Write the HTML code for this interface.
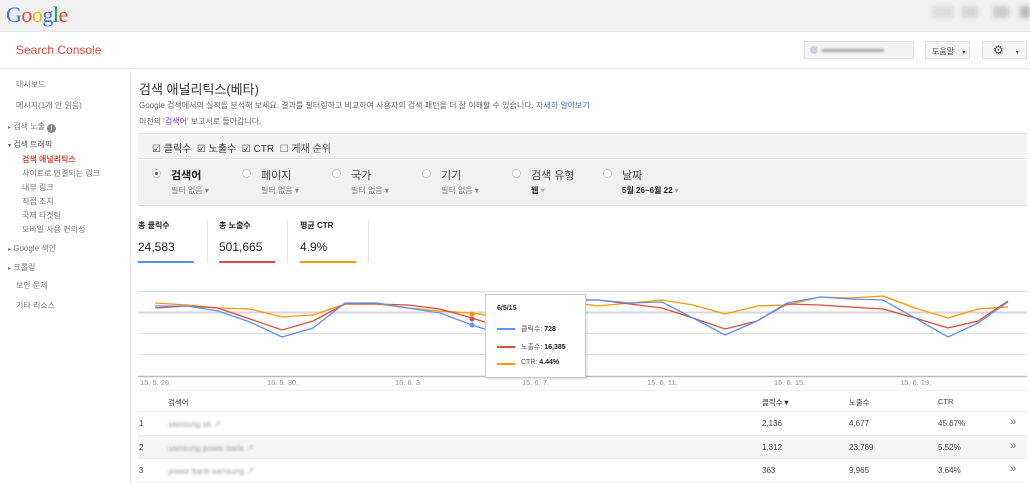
<!DOCTYPE html>
<html><head><meta charset="utf-8"><style>
*{margin:0;padding:0;box-sizing:border-box}
body{width:1030px;height:483px;overflow:hidden;background:#fff;font-family:"Liberation Sans","Noto Sans CJK KR",sans-serif;color:#444;position:relative}
.a{position:absolute;white-space:nowrap}
.s{font-size:8px;color:#666}
.side{font-size:8px;color:#777}
.blur{filter:blur(1.3px);color:#999;font-size:8px}
</style></head><body>
<div class="a" style="left:0;top:0;width:1030px;height:32px;background:#f1f1f1;border-bottom:1px solid #e5e5e5"></div>
<div class="a" style="left:6px;top:2px;font-size:22px;font-family:'Liberation Serif',serif;letter-spacing:-0.5px"><span style="color:#3b78e7">G</span><span style="color:#e04436">o</span><span style="color:#f4b400">o</span><span style="color:#3b78e7">g</span><span style="color:#0f9d58">l</span><span style="color:#e04436">e</span></div>
<div class="a" style="left:932px;top:6px;width:22px;height:12px;background:#ddd;filter:blur(2px)"></div>
<div class="a" style="left:962px;top:6px;width:16px;height:12px;background:#d6d6d6;filter:blur(2px)"></div>
<div class="a" style="left:993px;top:6px;width:16px;height:12px;background:#ccc;filter:blur(2px)"></div>
<div class="a" style="left:1020px;top:6px;width:10px;height:12px;background:#bbb;filter:blur(2px)"></div>
<div class="a" style="left:16px;top:43px;font-size:12px;color:#dd4b39">Search Console</div>
<div class="a" style="left:0;top:68px;width:1030px;border-top:1px solid #ebebeb"></div>
<div class="a" style="left:804px;top:41px;width:110px;height:18px;background:#f3f3f3;border:1px solid #ddd"></div>
<div class="a" style="left:810px;top:46px;width:8px;height:8px;border-radius:50%;background:#cdd3e6"></div>
<div class="a" style="left:822px;top:49px;width:62px;height:3px;background:#aaa;filter:blur(1px)"></div>
<div class="a" style="left:405px;top:41px;"></div>
<div class="a" style="left:925px;top:41px;width:45px;height:18px;background:#f5f5f5;border:1px solid #ddd;font-size:8px;color:#444;padding:4px 0 0 6px">도움말 <span style="margin-left:6px;font-size:6px">▾</span></div>
<div class="a" style="left:982px;top:41px;width:45px;height:18px;background:#f5f5f5;border:1px solid #ddd;font-size:12px;color:#555;padding:1px 0 0 10px">⚙<span style="margin-left:12px;font-size:6px">▾</span></div>
<div class="a" style="left:130px;top:69px;height:414px;border-left:1px solid #ebebeb"></div>
<div class="a side" style="left:16px;top:79px">대시보드</div>
<div class="a side" style="left:16px;top:100px">메시지(1개 안 읽음)</div>
<div class="a side" style="left:8px;top:121px"><span style="font-size:6px">▸</span> 검색 노출 <span style="display:inline-block;width:9px;height:9px;border-radius:50%;background:#888;color:#fff;font-size:7px;text-align:center;line-height:9px;vertical-align:-1px">i</span></div>
<div class="a side" style="left:8px;top:139px;color:#555"><span style="font-size:6px">▾</span> 검색 트래픽</div>
<div class="a side" style="left:22px;top:154px;color:#dd4b39;font-weight:bold">검색 애널리틱스</div>
<div class="a side" style="left:22px;top:168px">사이트로 연결되는 링크</div>
<div class="a side" style="left:22px;top:182px">내부 링크</div>
<div class="a side" style="left:22px;top:196px">직접 조치</div>
<div class="a side" style="left:22px;top:210px">국제 타겟팅</div>
<div class="a side" style="left:22px;top:224px">모바일 사용 편의성</div>
<div class="a side" style="left:8px;top:243px"><span style="font-size:6px">▸</span> Google 색인</div>
<div class="a side" style="left:8px;top:262px"><span style="font-size:6px">▸</span> 크롤링</div>
<div class="a side" style="left:16px;top:280px">보안 문제</div>
<div class="a side" style="left:16px;top:300px">기타 리소스</div>

<div class="a" style="left:139px;top:79px;font-size:13px;color:#333">검색 애널리틱스(베타)</div>
<div class="a s" style="left:139px;top:100px">Google 검색에서의 실적을 분석해 보세요. 결과를 필터링하고 비교하여 사용자의 검색 패턴을 더 잘 이해할 수 있습니다. <span style="color:#4b6fc1">자세히 알아보기</span></div>
<div class="a s" style="left:139px;top:116px">이전의 <span style="color:#7a3fc1">'검색어'</span> 보고서로 돌아갑니다.</div>

<div class="a" style="left:138px;top:133px;width:889px;height:26px;background:#f4f4f4;border-top:1px solid #ddd;border-bottom:1px solid #e2e2e2"></div>
<div class="a" style="left:152px;top:140px;font-size:10px;color:#333">☑ 클릭수 &nbsp;☑ 노출수 &nbsp;☑ CTR &nbsp;<span style="color:#555">☐ 게재 순위</span></div>
<div class="a" style="left:138px;top:160px;width:889px;height:46px;background:#f1f1f1;border-bottom:1px solid #ddd"></div>
<div class="a" style="left:152px;top:169px;width:9px;height:9px;border-radius:50%;border:1px solid #ccc;background:#fff"></div>
<div class="a" style="left:155px;top:172px;width:3px;height:3px;border-radius:50%;background:#555"></div>
<div class="a" style="left:171px;top:167px;font-size:11px;font-weight:bold;color:#222">검색어</div>
<div class="a s" style="left:171px;top:185px;color:#888">필터 없음 ▾</div>
<div class="a" style="left:242px;top:169px;width:9px;height:9px;border-radius:50%;border:1px solid #ccc;background:#fff"></div>
<div class="a" style="left:261px;top:167px;font-size:11px;color:#444">페이지</div>
<div class="a s" style="left:261px;top:185px;color:#888">필터 없음 ▾</div>
<div class="a" style="left:332px;top:169px;width:9px;height:9px;border-radius:50%;border:1px solid #ccc;background:#fff"></div>
<div class="a" style="left:351px;top:167px;font-size:11px;color:#444">국가</div>
<div class="a s" style="left:351px;top:185px;color:#888">필터 없음 ▾</div>
<div class="a" style="left:422px;top:169px;width:9px;height:9px;border-radius:50%;border:1px solid #ccc;background:#fff"></div>
<div class="a" style="left:441px;top:167px;font-size:11px;color:#444">기기</div>
<div class="a s" style="left:441px;top:185px;color:#888">필터 없음 ▾</div>
<div class="a" style="left:512px;top:169px;width:9px;height:9px;border-radius:50%;border:1px solid #ccc;background:#fff"></div>
<div class="a" style="left:531px;top:167px;font-size:11px;color:#444">검색 유형</div>
<div class="a s" style="left:531px;top:185px;color:#222;font-weight:bold">웹 <span style="color:#aaa;font-weight:normal">▾</span></div>
<div class="a" style="left:603px;top:169px;width:9px;height:9px;border-radius:50%;border:1px solid #ccc;background:#fff"></div>
<div class="a" style="left:622px;top:167px;font-size:11px;color:#444">날짜</div>
<div class="a s" style="left:622px;top:185px;color:#222;font-weight:bold">5월 26~6월 22 <span style="color:#aaa;font-weight:normal">▾</span></div>

<div class="a" style="left:138px;top:220px;font-size:8px;font-weight:bold;color:#222">총 클릭수</div>
<div class="a" style="left:138px;top:240px;font-size:12px;color:#222">24,583</div>
<div class="a" style="left:138px;top:261px;width:56px;height:2px;background:#4d90fe"></div>
<div class="a" style="left:207px;top:220px;height:43px;border-left:1px solid #e5e5e5"></div>
<div class="a" style="left:219px;top:220px;font-size:8px;font-weight:bold;color:#222">총 노출수</div>
<div class="a" style="left:219px;top:240px;font-size:12px;color:#222">501,665</div>
<div class="a" style="left:219px;top:261px;width:56px;height:2px;background:#dd4b39"></div>
<div class="a" style="left:287px;top:220px;height:43px;border-left:1px solid #e5e5e5"></div>
<div class="a" style="left:300px;top:220px;font-size:8px;font-weight:bold;color:#222">평균 CTR</div>
<div class="a" style="left:300px;top:240px;font-size:12px;color:#222">4.9%</div>
<div class="a" style="left:300px;top:261px;width:56px;height:2px;background:#ff9800"></div>
<div class="a" style="left:368px;top:220px;height:43px;border-left:1px solid #e5e5e5"></div>

<svg class="a" style="left:0;top:0" width="1030" height="483">
<g stroke="#e0e0e0" stroke-width="1"><line x1="138" y1="291.5" x2="1027" y2="291.5"/><line x1="138" y1="333.5" x2="1027" y2="333.5"/><line x1="138" y1="354.5" x2="1027" y2="354.5"/></g>
<line x1="138" y1="312.5" x2="1027" y2="312.5" stroke="#d6d6d6" stroke-width="2"/>
<line x1="138" y1="376.5" x2="1027" y2="376.5" stroke="#bbb" stroke-width="1.5"/>
<polyline fill="none" stroke="#ff9800" stroke-width="1.3" points="155,303 187,305 218,308 250,309 282,317 313,315 345,304 377,304 408,308 440,311 472,313 503,318 535,305 567,302 598,306 630,303 662,300 693,305 725,314 757,306 787,305 820,297 850,298 883,296 915,308 948,318 978,309 1008,307"/>
<polyline fill="none" stroke="#dd4b39" stroke-width="1.3" points="155,308 187,306 218,308 250,319 282,330 313,321 345,304 377,304 408,305 440,309 472,318 503,328 535,308 567,300 598,300 630,304 662,308 693,318 725,329 757,321 787,304 820,305 850,307 883,309 915,318 948,328 978,321 1008,301"/>
<polyline fill="none" stroke="#5b95f5" stroke-width="1.3" points="155,306 187,306 218,311 250,322 282,337 313,328 345,303 377,303 408,308 440,313 472,325 503,335 535,310 567,300 598,300 630,303 662,302 693,318 725,335 757,321 787,303 820,297 850,299 883,300 915,318 948,337 978,323 1008,302"/>
<circle cx="472" cy="314" r="2.5" fill="#ff9800"/><circle cx="472" cy="319" r="2.5" fill="#dd4b39"/><circle cx="472" cy="325" r="2.5" fill="#5b95f5"/>
<g font-family="Liberation Sans,sans-serif" font-size="7.5" fill="#999">
<text x="140" y="385">15. 5. 26.</text><text x="267" y="385">15. 5. 30.</text><text x="395" y="385">15. 6. 3.</text><text x="522" y="385">15. 6. 7.</text><text x="647" y="385">15. 6. 11.</text><text x="774" y="385">15. 6. 15.</text><text x="900" y="385">15. 6. 19.</text></g>
</svg>

<div class="a" style="left:485px;top:294px;width:101px;height:84px;background:#fff;border:1px solid #ccc;box-shadow:1px 1px 2px rgba(0,0,0,.15)"></div>
<div class="a" style="left:497px;top:305px;font-size:7px;font-weight:bold;color:#222">6/5/15</div>
<div class="a" style="left:497px;top:328px;width:18px;height:1.5px;background:#5b95f5"></div>
<div class="a" style="left:521px;top:324px;font-size:7px;color:#555">클릭수: <b style="color:#222">728</b></div>
<div class="a" style="left:497px;top:346px;width:18px;height:1.5px;background:#dd4b39"></div>
<div class="a" style="left:521px;top:342px;font-size:7px;color:#555">노출수: <b style="color:#222">16,385</b></div>
<div class="a" style="left:497px;top:363px;width:18px;height:1.5px;background:#ff9800"></div>
<div class="a" style="left:521px;top:359px;font-size:7px;color:#555">CTR: <b style="color:#222">4.44%</b></div>

<div class="a" style="left:138px;top:390px;width:889px;border-top:1px solid #f0f0f0"></div>
<div class="a" style="left:168px;top:397px;font-size:7.5px;color:#444">검색어</div>
<div class="a" style="left:762px;top:397px;font-size:7.5px;color:#333">클릭수▼</div>
<div class="a" style="left:849px;top:397px;font-size:7.5px;color:#444">노출수</div>
<div class="a" style="left:938px;top:397px;font-size:7.5px;color:#444">CTR</div>
<div class="a" style="left:138px;top:411px;width:889px;border-top:1px solid #eee"></div>
<div class="a" style="left:138px;top:435px;width:889px;height:24px;background:#f5f5f5;border-top:1px solid #eee;border-bottom:1px solid #eee"></div>
<div class="a" style="left:138px;top:482px;width:889px;border-top:1px solid #eee"></div>
<div class="a" style="left:139px;top:419px;font-size:8px;color:#444">1</div>
<div class="a" style="left:139px;top:443px;font-size:8px;color:#444">2</div>
<div class="a" style="left:139px;top:466px;font-size:8px;color:#444">3</div>
<div class="a blur" style="left:168px;top:419px">samsung s6 ↗</div>
<div class="a blur" style="left:168px;top:443px">samsung power bank ↗</div>
<div class="a blur" style="left:168px;top:466px">power bank samsung ↗</div>
<div class="a" style="left:762px;top:419px;font-size:8px;color:#444">2,136</div>
<div class="a" style="left:849px;top:419px;font-size:8px;color:#444">4,677</div>
<div class="a" style="left:938px;top:419px;font-size:8px;color:#444">45.67%</div>
<div class="a" style="left:762px;top:443px;font-size:8px;color:#444">1,312</div>
<div class="a" style="left:849px;top:443px;font-size:8px;color:#444">23,789</div>
<div class="a" style="left:938px;top:443px;font-size:8px;color:#444">5.52%</div>
<div class="a" style="left:762px;top:466px;font-size:8px;color:#444">363</div>
<div class="a" style="left:849px;top:466px;font-size:8px;color:#444">9,965</div>
<div class="a" style="left:938px;top:466px;font-size:8px;color:#444">3.64%</div>
<div class="a" style="left:1010px;top:416px;font-size:11px;color:#777">»</div>
<div class="a" style="left:1010px;top:440px;font-size:11px;color:#777">»</div>
<div class="a" style="left:1010px;top:463px;font-size:11px;color:#777">»</div>
</body></html>
